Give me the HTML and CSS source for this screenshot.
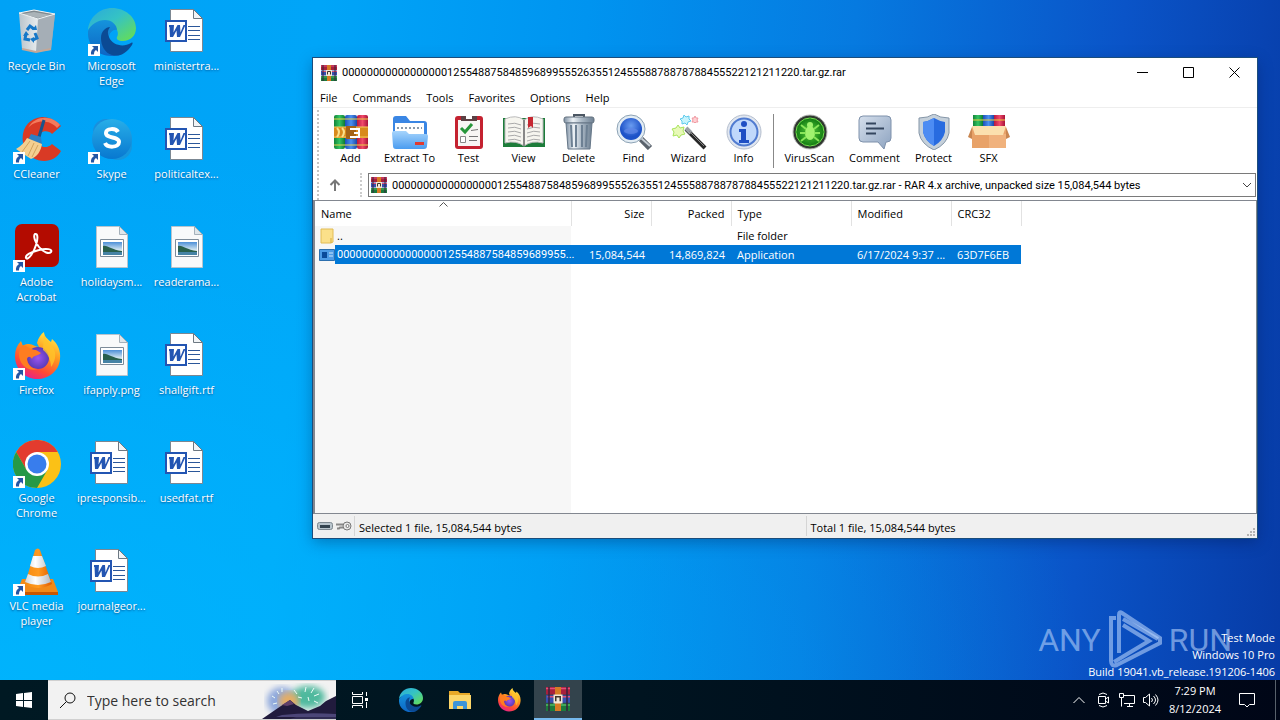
FILE: index.html
```html
<!DOCTYPE html>
<html lang="en">
<head>
<meta charset="utf-8">
<title>Desktop</title>
<link rel="stylesheet" href="styles.css">
</head>
<body>
<svg class="defs" aria-hidden="true">
  <defs>
    <linearGradient id="gBin" x1="0" x2="1"><stop offset="0" stop-color="#b9c4cc"/><stop offset=".5" stop-color="#e6eaec"/><stop offset="1" stop-color="#8e9aa6"/></linearGradient>
    <linearGradient id="gEdgeA" x1="0" x2="1" y1="0" y2="1"><stop offset="0" stop-color="#2aa9dc"/><stop offset=".45" stop-color="#35c3c4"/><stop offset="1" stop-color="#6be04a"/></linearGradient>
    <linearGradient id="gEdgeB" x1="0" x2="0" y1="0" y2="1"><stop offset="0" stop-color="#1593dc"/><stop offset="1" stop-color="#0d66c4"/></linearGradient>
    <linearGradient id="gSky" x1="0" x2="0" y1="0" y2="1"><stop offset="0" stop-color="#28aee8"/><stop offset="1" stop-color="#0878d0"/></linearGradient>
    <linearGradient id="gFox" x1=".8" x2=".3" y1="0" y2="1"><stop offset="0" stop-color="#fff04a"/><stop offset=".4" stop-color="#ff9a1f"/><stop offset=".75" stop-color="#ff4a35"/><stop offset="1" stop-color="#e6208c"/></linearGradient>
    <radialGradient id="gFoxIn"><stop offset="0" stop-color="#9a55f0"/><stop offset="1" stop-color="#5b3bb8"/></radialGradient>
    <linearGradient id="gCone" x1="0" x2="1"><stop offset="0" stop-color="#f58a10"/><stop offset=".5" stop-color="#ff9a20"/><stop offset="1" stop-color="#e05a00"/></linearGradient>
    <linearGradient id="gWhite" x1="0" x2="1"><stop offset="0" stop-color="#cfd4d8"/><stop offset=".4" stop-color="#fff"/><stop offset="1" stop-color="#b4bac0"/></linearGradient>
    <linearGradient id="gPic" x1="0" x2="0" y1="0" y2="1"><stop offset="0" stop-color="#4c8fd8"/><stop offset=".7" stop-color="#e8f3f4"/><stop offset="1" stop-color="#dfeef2"/></linearGradient>
    <linearGradient id="gGreen" x1="0" x2="1"><stop offset="0" stop-color="#12843a"/><stop offset=".5" stop-color="#33c463"/><stop offset="1" stop-color="#0d7a34"/></linearGradient>
    <linearGradient id="gBlue" x1="0" x2="1"><stop offset="0" stop-color="#1c4fb8"/><stop offset=".5" stop-color="#4a90f0"/><stop offset="1" stop-color="#1a48a8"/></linearGradient>
    <linearGradient id="gRed" x1="0" x2="1"><stop offset="0" stop-color="#b81840"/><stop offset=".5" stop-color="#f04a6a"/><stop offset="1" stop-color="#a81238"/></linearGradient>
    <linearGradient id="gFolder" x1="0" x2="0" y1="0" y2="1"><stop offset="0" stop-color="#a6d4fc"/><stop offset="1" stop-color="#4a9cf0"/></linearGradient>
    <linearGradient id="gSteel" x1="0" x2="1"><stop offset="0" stop-color="#7f91a4"/><stop offset=".3" stop-color="#eef3f7"/><stop offset=".6" stop-color="#a9b7c4"/><stop offset="1" stop-color="#6e8092"/></linearGradient>
    <linearGradient id="gBubble" x1="0" x2="1" y1="0" y2="1"><stop offset="0" stop-color="#d5dfec"/><stop offset="1" stop-color="#8da3c0"/></linearGradient>
    <radialGradient id="gLens" cy=".35"><stop offset="0" stop-color="#6a9cf0"/><stop offset="1" stop-color="#1d52c8"/></radialGradient>
    <radialGradient id="gVirus"><stop offset="0" stop-color="#5ad03c"/><stop offset="1" stop-color="#117a12"/></radialGradient>
    <filter id="soft"><feGaussianBlur stdDeviation="3"/></filter>

    <symbol id="shortcut" viewBox="0 0 12 12"><path d="M0 0h12v12H0z" fill="#fff"/><path d="M4 2h6v6L8 6C6.500 7 6 8 6 10.500H3C2.500 7.500 4 5.300 6 4z" fill="#2456a4"/></symbol>

    <symbol id="bin" viewBox="0 0 48 48">
      <path d="M6 5l15-3 21 4-4 36-17 2-12-3z" fill="url(#gBin)"/><path d="M6 5l15-3 21 4-17 5z" fill="#7f898f"/><path d="M9 6l12-2 17 3-13 3z" fill="#aab3b8"/>
      <path d="M25 11l17-5-4 35-15 3z" fill="#a5aeb6"/><path d="M6 5l19 6 17-5M6 5l15-3 21 4" fill="none" stroke="#eef3f5"/><path d="M9 41l14 3 15-3" fill="none" stroke="#c5a796" stroke-width="2"/>
      <g fill="none" stroke="#1678c8" stroke-width="3"><path d="M14 22l3-4 4 3"/><path d="M22 25l2 5-4 2"/><path d="M17 32l-5-1 1-5"/></g><path d="M19 22h5l-1-5zM21 29v6l-4-4zM10 28l3-5 3 4z" fill="#1678c8"/>
    </symbol>
    <symbol id="edge" viewBox="0 0 48 48">
      <path d="M0 22C1 9 12 0 24 0c13 0 24 9 24 20 0 8-6 13-13 13-5 0-7-2-6-4 2-3 1-10-6-12C13 13 4 16 0 22z" fill="url(#gEdgeA)"/>
      <path d="M0 23C3 16 10 12 17 12c7 0 12 5 12 10-3-1-8 2-8 8 0 8 5 13 13 16-4 2-8 2-11 2C9 48-1 37 0 23z" fill="url(#gEdgeB)"/>
      <path d="M13 30c0-7 5-11 9-11-2 3-3 6-1 10 3 8 14 11 22 6 2-1 2 0 1 2C38 46 31 49 24 47c-7-2-11-9-11-17z" fill="#0b4a94"/>
    </symbol>
    <symbol id="word" viewBox="3 0 48 48">
      <path d="M10.500 1.500h23l9 9v33h-32z" fill="#fff" stroke="#7b8792"/><path d="M33.500 1.500v9h9z" fill="#f1f4f6" stroke="#6d7882"/>
      <path d="M28 18.500h12M28 22.500h12M28 27.500h12M28 31.500h12" stroke="#2b579a"/><path d="M6 13h20v20H6z" fill="#fff" stroke="#2355b2" stroke-width="2"/>
      <path d="M9 17h5l-.5 7.500 4-7.500h2.500l.5 7.500 3-7.500h2l-5.500 12H17l-.5-6.500-3.500 6.500h-3l-.5-10H9z" fill="#2355b2"/>
    </symbol>
    <symbol id="image" viewBox="0 0 48 48">
      <path d="M8.500 2.500h23l8 8v33h-31z" fill="#f8f9fa" stroke="#b7c4ce"/><path d="M31.500 2.500v8h8z" fill="#dfe6ea" stroke="#a4b0ba"/>
      <path d="M12.500 15.500h23v17h-23z" fill="#fff" stroke="#7d8b99"/><path d="M15 18h19v13H15z" fill="url(#gPic)"/><path d="M15 22c5-1 8 4 19 5v2H15z" fill="#285f4c"/><path d="M15 28h19v3H15z" fill="#4683a5"/>
    </symbol>
    <symbol id="ccleaner" viewBox="0 0 48 48">
      <path d="M48 10l-9 8c-3-4-12-4-14 3-2 8 7 14 14 7l9 7C41 49 19 48 12 33 5 17 14 2 29 1c8 0 15 4 19 9z" fill="#d93a25"/><path d="M47 9l-3 3C36 3 22 4 15 12 23-2 40 0 47 9z" fill="#f47a5c"/>
      <path d="M31 4l-5 17" stroke="#18548c" stroke-width="3"/><path d="M18 18l10 3 1 8-14-5z" fill="#2d7fc4"/><path d="M14 22l15 6c-1 7-5 13-11 15L3 33c5-3 8-6 11-11z" fill="#f4cf90"/><path d="M17 25L9 36m12-9l-6 13m10-11l-6 12" stroke="#d2a35c"/>
    </symbol>
    <symbol id="skype" viewBox="0 0 48 48"><circle cx="18" cy="16" r="13" fill="#1a8fdc"/><circle cx="30" cy="30" r="14" fill="#1596dd"/><circle cx="24" cy="23" r="20" fill="url(#gSky)"/><path d="M30 16c-2-4-12-4-12 1 0 6 13 3 13 9 0 6-12 6-14 1" fill="none" stroke="#fff" stroke-width="4"/></symbol>
    <symbol id="acrobat" viewBox="0 0 48 48"><rect x="2" y="0" width="44" height="43" rx="7" fill="#b30b00"/><path d="M22 10c-2 2 0 8 4 13 5 6 10 7 12 5 2-3-5-4-12-2-8 2-14 5-13 8 2 3 8-6 10-13 2-6 2-12-1-11z" fill="none" stroke="#fff" stroke-width="2"/></symbol>
    <symbol id="firefox" viewBox="0 0 48 48">
      <path d="M2 24C2 18 4 13 8 9l2 5c2-2 4-2 6-2 4 0 6 3 10 3l-2-4C25 6 28 2 31 0c0 5 4 7 7 10l1-3c6 5 9 12 8 20-1 12-11 20-23 20S2 37 2 24z" fill="url(#gFox)"/>
      <circle cx="25" cy="26" r="11" fill="url(#gFoxIn)"/><path d="M10 13c5 1 7 5 13 5l5 3c-3 3-8 2-9 6-2-3-4-3-5 0 0 5 4 10 11 10-10 3-19-4-19-15 0-4 2-7 4-9z" fill="#ff7d20"/><path d="M31 1c1 9 9 10 11 19 1 6-1 11-4 15 0-8-4-14-8-17z" fill="#ffc42b" opacity=".8"/>
    </symbol>
    <symbol id="chrome" viewBox="0 0 48 48"><circle cx="24" cy="24" r="24" fill="#fbc116"/><path d="M3.200 12A24 24 0 0 1 44.800 12H24L13.600 30z" fill="#e33b2e"/><path d="M3.200 12A24 24 0 0 0 24 48l10.400-18L24 36l-10.400-6z" fill="#269947"/><circle cx="24" cy="24" r="12" fill="#fff"/><circle cx="24" cy="24" r="9.500" fill="#387ded"/></symbol>
    <symbol id="vlc" viewBox="0 0 48 48"><path d="M9 31h31l5 13v2H4v-2z" fill="#f28a18"/><path d="M4 44h41v3H4z" fill="#c95700"/><path d="M22 2q3-3 5 0l12 34q-14 8-27 0z" fill="url(#gCone)"/><path d="M20 8h9l4 10q-8 4-16 0zM15 26q10 5 20 0l3 8q-13 6-26 0z" fill="url(#gWhite)"/></symbol>

    <symbol id="books" viewBox="0 0 16 16">
      <path d="M0 0h16v5H0z" fill="#a8203c"/><path d="M0 5.500h16v5H0z" fill="#3650b0"/><path d="M0 11h16v5H0z" fill="#1c7a3c"/><path d="M0 1h16M1 6.500h15" stroke="#e0507a"/><path d="M0 12h16" stroke="#50b860"/>
      <path d="M2 0v16M14 0v16" stroke="#36203c"/><path d="M6 0h4v16H6z" fill="#d77b24"/><path d="M5 5h6v6H5z" fill="#f2e7d5"/><path d="M6.500 9.500V6.500h3v3" fill="none" stroke="#42342b"/>
    </symbol>
    <symbol id="i-add" viewBox="0 0 36 36">
      <rect x="1" y="1" width="11" height="34" rx="2" fill="url(#gGreen)"/><rect x="12" y="1" width="12" height="34" rx="2" fill="url(#gBlue)"/><rect x="24" y="1" width="11" height="34" rx="2" fill="url(#gRed)"/>
      <path d="M1 5h34M1 31h34" stroke="#e9d34a"/><path d="M1 13h34v11H1z" fill="#d88a1c"/><path d="M1 13h34M1 23h34" stroke="#f6cb5a"/><path d="M4 14q4 4 0 9M9 14q4 4 0 9" fill="none" stroke="#fbe08a" stroke-width="2"/><path d="M13 12h10v13H13z" fill="#a56316"/><path d="M17 15h9v8h-9M21 19h5" fill="none" stroke="#fff" stroke-width="2"/>
    </symbol>
    <symbol id="i-extract" viewBox="0 0 36 36"><path d="M1 5q0-3 3-3h10l4 5h14q3 0 3 3v14H1z" fill="#3a86e4"/><path d="M3 9h29v11H3z" fill="#fff"/><path d="M5 14h25" stroke="#8a9aab" stroke-width="2" stroke-dasharray="2 2"/><path d="M0 19q0-2 2-2h12l3 3h17q2 0 2 2l-1 10q0 3-3 3H4q-3 0-3-3z" fill="url(#gFolder)"/><rect x="23" y="28" width="9" height="3" fill="#e03a30"/></symbol>
    <symbol id="i-test" viewBox="0 0 36 36"><rect x="4" y="2" width="28" height="33" rx="3" fill="#c42230"/><path d="M7 6h22v26H7z" fill="#f8f6f4"/><path d="M10 2h16v5H10z" fill="#5c4144"/><path d="M15 2h6v3h-6z" fill="#fff"/><path d="M10 14l4 4 7-8" fill="none" stroke="#27963a" stroke-width="3"/><path d="M20 16.500l7-1M18 22.500h9M18 26.500h8" stroke="#777"/><path d="M9.500 22.500h5v6h-5z" fill="#fff" stroke="#888"/></symbol>
    <symbol id="i-view" viewBox="0 0 42 36"><path d="M0 4h42v29H0z" fill="#1d7c3a"/><path d="M2 5q11-5 19 1 8-6 19-1v24q-11-3-19 3-8-6-19-3z" fill="#f6f5ef" stroke="#bbb"/><path d="M21 6v26" stroke="#888" stroke-width="2"/><path d="M5 10q7-2 13 1M5 14q7-2 13 1M5 18q7-2 13 1M5 22q7-2 13 1M5 26q7-2 13 1M24 11q7-3 13-1M24 15q7-3 13-1M24 19q7-3 13-1M24 23q7-3 13-1M24 27q7-3 13-1" fill="none" stroke="#aaa"/><path d="M25 3h5v11l-2-2-3 2z" fill="#c62832"/></symbol>
    <symbol id="i-delete" viewBox="0 0 36 36"><path d="M13 4V1h10v3" fill="none" stroke="#4c5763" stroke-width="2"/><rect x="3" y="3" width="30" height="6" rx="2" fill="url(#gSteel)" stroke="#63717e"/><path d="M5 9h26l-2 26H7z" fill="url(#gSteel)" stroke="#667788"/><path d="M10 11l1 22M15 11v22M21 11v22M26 11l-1 22" stroke="#6d8093" stroke-width="2"/></symbol>
    <symbol id="i-find" viewBox="0 0 36 36"><path d="M25 25l9 9" stroke="#5a626c" stroke-width="6"/><path d="M25 24l9 8" stroke="#c5ccd4" stroke-width="2"/><circle cx="15" cy="15" r="14" fill="#e2ecf4" stroke="#8da3b5"/><circle cx="15" cy="15" r="11" fill="url(#gLens)"/><ellipse cx="15" cy="17" rx="7" ry="3" fill="#6389e8" opacity=".7"/></symbol>
    <symbol id="i-wizard" viewBox="0 0 36 36"><path d="M15 15l19 19" stroke="#282828" stroke-width="4"/><path d="M15 14l5 5" stroke="#9ba0a5" stroke-width="4"/><path d="M18 17l15 15" stroke="#888"/><path d="M7 11l2 3 4-1-1 4 2 3-4 1-2 3-2-3-4 1 1-4-2-3 4-1z" fill="#e8f9b8" stroke="#a9e45c"/><path d="M13 1l2 2 3-1v3l2 2-3 1-1 3-2-2-3 1v-3l-2-2 3-1z" fill="#c7f4fc" stroke="#5fcaec"/><path d="M24 2l1 2h2l-1 2 1 2h-2l-1 1-1-1h-2l1-2-1-2h2z" fill="#ffd0d4" stroke="#f09aa2"/></symbol>
    <symbol id="i-info" viewBox="0 0 36 36"><circle cx="18" cy="18" r="17" fill="#e1e7f0" stroke="#b4bece"/><circle cx="18" cy="18" r="13.500" fill="#c0d8fb" stroke="#507bd0" stroke-width="2"/><circle cx="18" cy="10" r="3" fill="#1e4fc4"/><path d="M13 15h7v11h3v3H13v-3h2v-8h-2z" fill="#1e4fc4"/></symbol>
    <symbol id="i-virus" viewBox="0 0 36 36"><circle cx="18" cy="18" r="17" fill="#303830" stroke="#bbb"/><circle cx="18" cy="18" r="14" fill="url(#gVirus)" stroke="#75dc50"/><path d="M18 3v30M3 18h30" stroke="#268e20"/><ellipse cx="18" cy="19" rx="5" ry="7" fill="#a0f26e"/><circle cx="18" cy="11" r="3" fill="#a0f26e"/><path d="M9 11l5 4M8 19h6M9 27l5-4M27 11l-5 4M28 19h-6M27 27l-5-4" stroke="#8ae65a" stroke-width="2"/></symbol>
    <symbol id="i-comment" viewBox="0 0 36 36"><path d="M6 2h24q4 0 4 4v18q0 4-4 4h-1l-2 7-6-7H6q-4 0-4-4V6q0-4 4-4z" fill="url(#gBubble)" stroke="#7e91ab"/><path d="M9 9.500h10M9 14.500h18M9 19.500h10" stroke="#34465f" stroke-width="2"/></symbol>
    <symbol id="i-protect" viewBox="0 0 36 36"><path d="M18 0q6 4 15 4v15q-2 11-15 17Q5 30 3 19V4q9 0 15-4z" fill="#c5d0da" stroke="#8495a7"/><path d="M18 4q5 3 11 4v10q-2 9-11 14Q9 27 7 18V8q6-1 11-4z" fill="#286be0"/><path d="M18 4v28Q9 27 7 18V8q6-1 11-4z" fill="#4d8cf3"/></symbol>
    <symbol id="i-sfx" viewBox="0 0 42 36"><path d="M5 1h10v14H5z" fill="url(#gGreen)"/><path d="M15 1h11v14H15z" fill="url(#gBlue)"/><path d="M26 1h11v14H26z" fill="url(#gRed)"/><path d="M5 6h32" stroke="#f0d040"/><path d="M4 13h34v21H4z" fill="#e8a268"/><path d="M21 20v14h17V20z" fill="#f0b27d"/><path d="M4 13l-4 10 4 2z" fill="#c98650"/><path d="M38 13l4 10-4 2z" fill="#c98650"/><path d="M4 12h34l-3 9H7z" fill="#fbe0ae"/></symbol>
  </defs>
</svg>

<div class="screen">
  <main class="desktop">
    <nav class="shortcuts" aria-label="Desktop">
      <a class="shortcut" href="#"><span class="pic"><svg><use href="#bin"/></svg></span>Recycle Bin</a>
      <a class="shortcut" href="#"><span class="pic"><svg><use href="#ccleaner"/></svg><svg class="arrow"><use href="#shortcut"/></svg></span>CCleaner</a>
      <a class="shortcut" href="#"><span class="pic"><svg><use href="#acrobat"/></svg><svg class="arrow"><use href="#shortcut"/></svg></span>Adobe Acrobat</a>
      <a class="shortcut" href="#"><span class="pic"><svg><use href="#firefox"/></svg><svg class="arrow"><use href="#shortcut"/></svg></span>Firefox</a>
      <a class="shortcut" href="#"><span class="pic"><svg><use href="#chrome"/></svg><svg class="arrow"><use href="#shortcut"/></svg></span>Google Chrome</a>
      <a class="shortcut" href="#"><span class="pic"><svg><use href="#vlc"/></svg><svg class="arrow"><use href="#shortcut"/></svg></span>VLC media player</a>
      <a class="shortcut" href="#"><span class="pic"><svg><use href="#edge"/></svg><svg class="arrow"><use href="#shortcut"/></svg></span>Microsoft Edge</a>
      <a class="shortcut" href="#"><span class="pic"><svg><use href="#skype"/></svg><svg class="arrow"><use href="#shortcut"/></svg></span>Skype</a>
      <a class="shortcut" href="#"><span class="pic"><svg><use href="#image"/></svg></span>holidaysm...</a>
      <a class="shortcut" href="#"><span class="pic"><svg><use href="#image"/></svg></span>ifapply.png</a>
      <a class="shortcut" href="#"><span class="pic"><svg><use href="#word"/></svg></span>ipresponsib...</a>
      <a class="shortcut" href="#"><span class="pic"><svg><use href="#word"/></svg></span>journalgeor...</a>
      <a class="shortcut" href="#"><span class="pic"><svg><use href="#word"/></svg></span>ministertra...</a>
      <a class="shortcut" href="#"><span class="pic"><svg><use href="#word"/></svg></span>politicaltex...</a>
      <a class="shortcut" href="#"><span class="pic"><svg><use href="#image"/></svg></span>readerama...</a>
      <a class="shortcut" href="#"><span class="pic"><svg><use href="#word"/></svg></span>shallgift.rtf</a>
      <a class="shortcut" href="#"><span class="pic"><svg><use href="#word"/></svg></span>usedfat.rtf</a>
    </nav>

    <div class="watermark">
      <span>ANY</span>
      <svg class="play" viewBox="0 0 54 60" fill="none" stroke="currentColor" stroke-width="4"><path d="M8 8H3v43q0 6 6 4l43-22v-5L14 3q-3-2-3 2v38M15 15l26 16L6 52"/><path d="M15 9l35 20"/></svg>
      <span>RUN</span>
    </div>
    <div class="build"><p>Test Mode</p><p>Windows 10 Pro</p><p>Build 19041.vb_release.191206-1406</p></div>

    <section class="window">
      <header class="titlebar">
        <svg class="small-icon"><use href="#books"/></svg>
        <h1 class="title">00000000000000000125548875848596899555263551245558878878788455522121211220.tar.gz.rar</h1>
        <button class="control" aria-label="Minimize"><svg viewBox="0 0 11 11"><path d="M0 5.500h11"/></svg></button>
        <button class="control" aria-label="Maximize"><svg viewBox="0 0 11 11"><path d="M.5.5h10v10H.5z"/></svg></button>
        <button class="control" aria-label="Close"><svg viewBox="0 0 11 11"><path d="M.5.5l10 10M10.500.5l-10 10"/></svg></button>
      </header>
      <nav class="menu" aria-label="Menu">
        <button>File</button><button>Commands</button><button>Tools</button><button>Favorites</button><button>Options</button><button>Help</button>
      </nav>
      <div class="bars">
        <div class="toolbar">
          <button class="tool"><svg><use href="#i-add"/></svg>Add</button>
          <button class="tool tool-wide"><svg><use href="#i-extract"/></svg>Extract To</button>
          <button class="tool"><svg><use href="#i-test"/></svg>Test</button>
          <button class="tool"><svg><use href="#i-view"/></svg>View</button>
          <button class="tool"><svg><use href="#i-delete"/></svg>Delete</button>
          <button class="tool"><svg><use href="#i-find"/></svg>Find</button>
          <button class="tool"><svg><use href="#i-wizard"/></svg>Wizard</button>
          <button class="tool"><svg><use href="#i-info"/></svg>Info</button>
          <span class="divider"></span>
          <button class="tool tool-wider"><svg><use href="#i-virus"/></svg>VirusScan</button>
          <button class="tool tool-wide"><svg><use href="#i-comment"/></svg>Comment</button>
          <button class="tool"><svg><use href="#i-protect"/></svg>Protect</button>
          <button class="tool"><svg><use href="#i-sfx"/></svg>SFX</button>
        </div>
        <div class="address">
          <button class="up" aria-label="Up one level"><svg viewBox="0 0 12 12"><path d="M6 12V2M1.500 6L6 1.500 10.500 6"/></svg></button>
          <div class="path">
            <svg class="small-icon"><use href="#books"/></svg>
            <select aria-label="Location"><option>00000000000000000125548875848596899555263551245558878878788455522121211220.tar.gz.rar - RAR 4.x archive, unpacked size 15,084,544 bytes</option></select>
            <svg class="caret" viewBox="0 0 10 6"><path d="M1 1l4 4 4-4"/></svg>
          </div>
        </div>
      </div>
      <div class="list">
        <table>
          <colgroup><col class="c-name"><col class="c-num"><col class="c-num"><col class="c-type"><col class="c-date"><col class="c-crc"></colgroup>
          <thead><tr><th class="sorted">Name<svg class="sort" viewBox="0 0 9 5"><path d="M.5 4.500l4-4 4 4"/></svg></th><th class="num">Size</th><th class="num">Packed</th><th>Type</th><th>Modified</th><th>CRC32</th></tr></thead>
          <tbody>
            <tr><td class="name"><div><svg class="file-icon" viewBox="0 0 16 16"><path d="M2 1h12v13l-2 1H2z" fill="#fbe08a" stroke="#e2bc55"/><path d="M12 10v5" stroke="#d5aa3e"/></svg><span>..</span></div></td><td></td><td></td><td>File folder</td><td></td><td></td></tr>
            <tr class="selected"><td class="name"><div><svg class="file-icon" viewBox="0 0 16 16"><path d="M.5 2.500h15v11H.5z" fill="#4d9be6" stroke="#2c6fae"/><path d="M3 5h5v6H3z" fill="#0a4a9a"/><path d="M10 6h4M10 9h4" stroke="#cfe6fa"/></svg><span class="digits">0000000000000000012554887584859689955...</span></div></td><td class="num">15,084,544</td><td class="num">14,869,824</td><td>Application</td><td>6/17/2024 9:37 ...</td><td>63D7F6EB</td></tr>
          </tbody>
        </table>
      </div>
      <footer class="status">
        <span class="status-icons">
          <svg class="drive" viewBox="0 0 16 8"><rect x=".5" y=".5" width="15" height="7" rx="2" fill="#b8c4cc" stroke="#7d8890"/><path d="M3 3h10v3H3z" fill="#33434f"/></svg>
          <svg class="key" viewBox="0 0 16 10"><circle cx="11" cy="5" r="4" fill="#e8e8e8" stroke="#777"/><circle cx="11.500" cy="5" r="1.500" fill="#fff" stroke="#777"/><path d="M7 3.500H0M7 6.500H4l-1 1H1" fill="none" stroke="#888" stroke-width="2"/></svg>
        </span>
        <span class="status-text">Selected 1 file, 15,084,544 bytes</span>
        <span class="status-text">Total 1 file, 15,084,544 bytes</span>
        <svg class="grip" viewBox="0 0 8 8"><path d="M6 0h2v2H6zM3 3h2v2H3zM6 3h2v2H6zM0 6h2v2H0zM3 6h2v2H3zM6 6h2v2H6z" fill="#b4b4b4"/></svg>
      </footer>
    </section>
  </main>

  <footer class="taskbar">
    <button class="task" aria-label="Start"><svg class="i16" viewBox="0 0 16 16"><path d="M0 2l7-1v7H0zM8 1l8-1v8H8zM0 9h7v6l-7-1zM8 9h8v7l-8-1z" fill="#fff"/></svg></button>
    <label class="search">
      <svg class="i16" viewBox="0 0 16 16"><circle cx="10" cy="6" r="5" fill="none" stroke="#111"/><path d="M6.500 9.500L0 16" stroke="#111"/></svg>
      <input type="text" placeholder="Type here to search">
      <svg class="fireworks" viewBox="0 0 74 38"><ellipse cx="20" cy="20" rx="15" ry="14" fill="#8fa9dc" filter="url(#soft)"/><ellipse cx="46" cy="16" rx="17" ry="11" fill="#50b99e" filter="url(#soft)"/><ellipse cx="27" cy="20" rx="10" ry="9" fill="#e6ad63" filter="url(#soft)"/><path d="M10 15l3 2M20 7v4M15 10l2 3M11 23l4-1M32 9l3 4M44 6l-1 5M52 7l-3 5M57 13l-5 2M36 16l4 1M47 20l-1-4M56 22l-4-2" stroke="#eefcf8"/><path d="M0 38L16 27l12-8 6 5 12 6 12-5 6-5 10-5v23z" fill="#211b3d"/><path d="M20 24l8-5 4 4-7 2z" fill="#60406a"/><path d="M20 34q25-3 54-1v3H14z" fill="#4c4678"/><path d="M34 36h40v2H28z" fill="#302b53"/></svg>
    </label>
    <button class="task taskview" aria-label="Task View"><svg class="i18" viewBox="0 0 18 18" fill="none" stroke="#fff"><path d="M1.500 5.500h10v7h-10zM1.500 1v2.500h10V1M1.500 17v-2.500h10V17M15.500 1v4M15.500 11v6"/><path d="M14 7h3v3h-3z" fill="#fff" stroke="none"/></svg></button>
    <button class="task" aria-label="Edge"><svg class="i24"><use href="#edge"/></svg></button>
    <button class="task" aria-label="File Explorer"><svg class="i24" viewBox="0 0 24 24"><path d="M1 3h9l2 2h10v16H1z" fill="#e8a928"/><path d="M1 7h22v14H1z" fill="#fcd669"/><path d="M5 21v-6q0-2 2-2h10q2 0 2 2v6h-4v-3H9v3z" fill="#3c94d8"/></svg></button>
    <button class="task" aria-label="Firefox"><svg class="i24"><use href="#firefox"/></svg></button>
    <button class="task active" aria-label="WinRAR"><svg class="i24"><use href="#books"/></svg></button>
    <div class="tray">
      <svg class="i16" viewBox="0 0 16 16"><path d="M2.500 11L8 5.500l5.500 5.500"/></svg>
      <svg class="i16" viewBox="0 0 16 16"><path d="M3.500 4.500h7v7h-7zM10.500 7l3-2v6l-3-2M4 2.500q4-3 8 0M4 13.500q4 3 8 0"/></svg>
      <svg class="i16" viewBox="0 0 16 16"><path d="M4 3.500h11.500v8H5M8 14.500h6M10.500 12v2M.5 1.500h4v4h-4zM2.500 5.500v9"/></svg>
      <svg class="i16" viewBox="0 0 16 16"><path d="M.5 5.500h2l4-3.500v12l-4-3.500h-2zM8.500 6q2 2 0 4M10.500 4q4 4 0 8M12.500 2.500q5 5.500 0 11"/></svg>
      <time class="clock"><span>7:29 PM</span><span>8/12/2024</span></time>
      <button class="notice" aria-label="Notifications"><svg class="i18" viewBox="0 0 18 18"><path d="M1.500 2.500h15v11h-5L9 16l-2.500-2.500h-5z"/></svg></button>
    </div>
  </footer>
</div>
</body>
</html>
```

FILE: styles.css
```css
* { box-sizing: border-box; }
body { margin: 0; font: 11px/15px "Open Sans", "Noto Sans", sans-serif; color: #000; }
button { font: inherit; color: inherit; background: none; border: 0; padding: 0; margin: 0; }
svg { display: block; flex: none; }
.defs { position: absolute; width: 0; height: 0; }

.screen { display: flex; flex-direction: column; height: 100vh; overflow: hidden; }
.desktop {
  position: relative; flex: 1; min-height: 0;
  background:
    radial-gradient(ellipse at 0% 100%, rgba(0, 186, 255, .7), rgba(0, 186, 255, 0) 60%),
    linear-gradient(95deg, #00a2f6 0%, #00a5f8 24%, #0094f0 44%, #067ae0 64%, #0a54c8 84%, #073ba6 100%);
}

.shortcuts { display: grid; grid-auto-flow: column; grid-template-rows: repeat(6, 108px); grid-auto-columns: 75px; justify-content: start; margin-left: -1px; padding-top: 8px; }
.shortcut { display: flex; flex-direction: column; align-items: center; text-align: center; color: #fff; text-decoration: none; text-shadow: 0 1px 2px rgba(0, 50, 110, .7); }
.pic { position: relative; width: 48px; height: 48px; margin-bottom: 2px; }
.pic svg { width: 48px; height: 48px; }
.pic .arrow { position: absolute; left: 0; bottom: 0; width: 12px; height: 12px; }

.watermark { position: absolute; right: 48px; bottom: 10px; display: flex; align-items: center; gap: 7px; color: rgba(180, 208, 250, .6); font: 32px/60px Roboto, sans-serif; }
.play { width: 54px; height: 60px; }
.build { position: absolute; right: 5px; bottom: 0; color: #fff; text-align: right; line-height: 17px; }
.build p { margin: 0; }

.window { position: absolute; left: 313px; right: 23px; top: 58px; height: 480px; display: flex; flex-direction: column; background: #fff; box-shadow: 0 0 0 1px #1b4d7c, 0 4px 14px rgba(0, 20, 70, .35); }
.titlebar { display: flex; align-items: center; height: 29px; padding-left: 8px; }
.small-icon { width: 16px; height: 16px; }
.title { flex: 1; margin: 0; padding-left: 5px; font: 11px/15px Roboto, sans-serif; }
.control { display: flex; align-items: center; justify-content: center; width: 46px; height: 29px; }
.control svg { width: 11px; height: 11px; fill: none; stroke: #000; }
.menu { display: flex; align-items: center; gap: 15px; height: 21px; padding-left: 7px; border-bottom: 1px solid #eee; }
.bars { padding-left: 6px; background: radial-gradient(circle at 1px 1px, #c4c4c4 1px, transparent 1px) 4px 2px / 4px 4px repeat-y; }
.toolbar { display: flex; height: 64px; padding: 6px 0 0 4px; }
.tool { display: flex; flex-direction: column; align-items: center; width: 55px; white-space: nowrap; }
.tool svg { width: 42px; height: 36px; }
.tool-wide { width: 63px; }
.tool-wider { width: 67px; }
.divider { width: 1px; height: 54px; margin: 0 2px; background: #888; }
.address { display: flex; height: 28px; padding: 1px 1px 3px 0; }
.up { display: flex; align-items: center; width: 43px; padding-left: 10px; border-right: 2px dotted #ccc; }
.up svg { width: 12px; height: 12px; fill: none; stroke: #777; stroke-width: 2; }
.path { flex: 1; display: flex; align-items: center; margin-left: 6px; padding: 0 3px 0 2px; border: 1px solid #7a7a7a; }
.path select { flex: 1; min-width: 0; padding: 0 0 0 5px; border: 0; background: none; appearance: none; font: 11px/15px Roboto, sans-serif; color: #000; }
.caret { width: 10px; height: 6px; fill: none; stroke: #444; }

.list { flex: 1; border: 1px solid #828790; border-width: 1px 1px 1px 2px; background: linear-gradient(#fff, #fff) 0 0 / 100% 25px no-repeat, linear-gradient(#f7f7f7, #f7f7f7) 0 0 / 256px 100% no-repeat; }
table { table-layout: fixed; width: 706px; border-collapse: collapse; }
.c-name { width: 256px; }
.c-num { width: 80px; }
.c-type { width: 120px; }
.c-date { width: 100px; }
.c-crc { width: 70px; }
th { position: relative; height: 25px; padding: 0 6px; border-right: 1px solid #e2e2e2; font-weight: 400; text-align: left; }
.sort { position: absolute; left: 124px; top: 1px; width: 9px; height: 5px; fill: none; stroke: #555; }
td { height: 19px; padding: 0 5px 0 6px; white-space: nowrap; }
.num { text-align: right; padding-right: 6px; }
.name { padding: 0 2px 0 4px; }
.name div { display: flex; align-items: center; }
.name span { padding-left: 2px; line-height: 19px; }
.digits { font-family: Roboto, sans-serif; }
.file-icon { width: 16px; height: 16px; }
.selected td { color: #fff; background: #0078d7; }
.selected .name { background: linear-gradient(90deg, #f7f7f7 20px, #0078d7 20px); }

.status { position: relative; display: flex; align-items: center; height: 24px; background: #f0f0f0; }
.status-icons { display: flex; align-items: center; gap: 3px; width: 42px; height: 20px; padding-left: 4px; border-right: 1px solid #d5d5d5; }
.drive { width: 16px; height: 8px; }
.key { width: 16px; height: 10px; }
.status-text { flex: 1; height: 20px; padding: 4px 4px 0; border-right: 1px solid #d5d5d5; }
.status-text + .status-text { border: 0; }
.grip { position: absolute; right: 2px; bottom: 2px; width: 8px; height: 8px; }

.taskbar { display: flex; height: 40px; background: linear-gradient(90deg, #001923, #001420 50%, #000617); color: #fff; }
.task { display: flex; align-items: center; justify-content: center; width: 48px; margin-right: 1px; }
.task:first-child { margin-right: 0; }
.taskview { margin-right: 3px; }
.active { background: #33434c; border-bottom: 2px solid #76b9ed; }
.i16 { width: 16px; height: 16px; }
.i18 { width: 18px; height: 18px; }
.i24 { width: 24px; height: 24px; }
.search { display: flex; align-items: center; width: 288px; padding-left: 12px; background: #f2f2f2; border: 1px solid #d0d0d0; border-width: 1px 0; }
.search input { flex: 1; min-width: 0; padding: 0 0 0 11px; border: 0; background: none; font: 14px "Open Sans", "Noto Sans", sans-serif; }
.search input::placeholder { color: #333; }
.fireworks { width: 74px; height: 38px; }
.tray { display: flex; align-items: center; gap: 8px; margin-left: auto; padding-right: 4px; }
.tray svg { fill: none; stroke: #fff; }
.clock { display: flex; flex-direction: column; align-items: center; width: 56px; line-height: 18px; }
.notice { display: flex; align-items: center; justify-content: center; width: 45px; height: 40px; border-right: 1px solid #58616b; padding-right: 12px; }
```
